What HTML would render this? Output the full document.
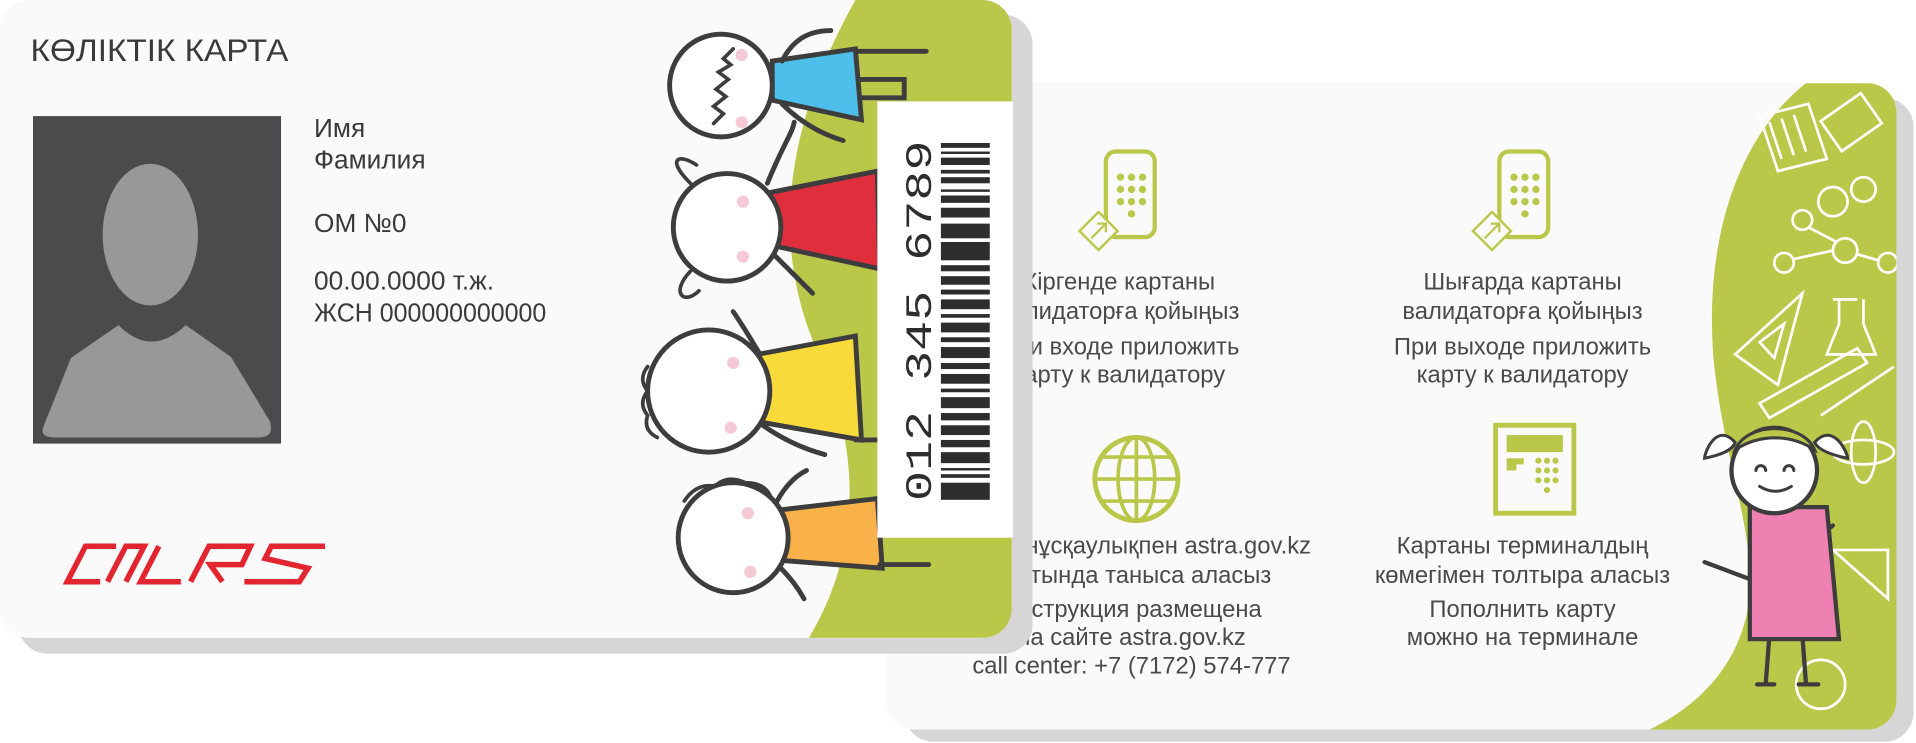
<!DOCTYPE html>
<html><head><meta charset="utf-8"><style>
html,body{margin:0;padding:0;background:#fff;width:1916px;height:743px;overflow:hidden}
svg{display:block}
.t{font-family:"Liberation Sans",sans-serif;fill:#4a4a4a}
.n{font-family:"Liberation Sans Narrow","Liberation Sans",sans-serif;fill:#3a3a3a}
</style></head><body>
<svg width="1916" height="743" viewBox="0 0 1568 608" preserveAspectRatio="none" xmlns="http://www.w3.org/2000/svg">
<defs>
<clipPath id="bc"><rect x="725" y="68" width="827" height="529" rx="24"/></clipPath>
<clipPath id="fc"><rect x="0" y="0" width="828" height="522" rx="24"/></clipPath>
</defs>
<rect x="740" y="80" width="826" height="527" rx="24" fill="#d6d6d6"/>
<rect x="725" y="68" width="827" height="529" rx="24" fill="#fafafa"/>
<g clip-path="url(#bc)">
<path d="M1478,68 C1425,110 1395,190 1402,290 C1410,380 1440,440 1430,500 C1420,550 1385,580 1350,597 L1560,597 L1560,68 Z" fill="#bac84a"/>
<g fill="none" stroke="#fff" stroke-width="2.2">
<rect x="1495" y="85" width="40" height="30" transform="rotate(-35 1515 100)"/>
<path d="M1440,95 l40,-10 l15,45 l-40,10 z M1448,100 l10,30 M1458,97 l10,30 M1468,94 l10,30"/>
<circle cx="1500" cy="165" r="12"/><circle cx="1525" cy="155" r="10"/>
<circle cx="1475" cy="180" r="8"/><circle cx="1510" cy="205" r="10"/><circle cx="1545" cy="215" r="8"/><circle cx="1460" cy="215" r="8"/>
<path d="M1480,186 L1503,198 M1468,212 L1500,205 M1520,208 L1537,213"/>
<path d="M1420,290 l55,-50 l-20,75 z M1440,280 l20,-15 l-8,28 z"/>
<path d="M1500,245 l20,0 M1505,245 l0,20 l-10,25 l40,0 l-10,-25 l0,-20"/>
<path d="M1440,330 l80,-45 l8,12 l-80,45 z M1490,340 l60,-40"/>
<ellipse cx="1525" cy="370" rx="25" ry="10"/><ellipse cx="1525" cy="370" rx="10" ry="25"/>
<path d="M1500,450 l45,0 l0,40 z M1470,560 a20,20 0 1,0 40,0 a20,20 0 1,0 -40,0"/>
</g>
</g>
<g fill="none" stroke="#bac84a" stroke-width="3.5">
<rect x="905" y="124" width="40" height="70" rx="8"/>
<rect x="1227" y="124" width="40" height="70" rx="8"/>
<circle cx="930" cy="392" r="34" stroke-width="4"/>
<ellipse cx="930" cy="392" rx="15" ry="34" stroke-width="3"/>
<line x1="930" y1="358" x2="930" y2="426" stroke-width="3"/>
<line x1="896" y1="392" x2="964" y2="392" stroke-width="3"/>
<line x1="901" y1="374" x2="959" y2="374" stroke-width="3"/>
<line x1="901" y1="410" x2="959" y2="410" stroke-width="3"/>
<rect x="1224" y="348" width="64" height="72" stroke-width="4"/>
</g>
<g fill="#fafafa" stroke="#bac84a" stroke-width="2">
<rect x="888" y="178" width="22" height="22" transform="rotate(45 899 189)"/>
<rect x="1210" y="178" width="22" height="22" transform="rotate(45 1221 189)"/>
</g>
<path d="M893,195 l12,-12 m-7,0 h7 v7 M1215,195 l12,-12 m-7,0 h7 v7" stroke="#bac84a" stroke-width="1.8" fill="none"/>
<g fill="#bac84a">
<circle cx="917" cy="145" r="3"/><circle cx="926" cy="145" r="3"/><circle cx="935" cy="145" r="3"/>
<circle cx="917" cy="155" r="3"/><circle cx="926" cy="155" r="3"/><circle cx="935" cy="155" r="3"/>
<circle cx="917" cy="165" r="3"/><circle cx="926" cy="165" r="3"/><circle cx="935" cy="165" r="3"/>
<circle cx="926" cy="175" r="3"/>
<circle cx="1239" cy="145" r="3"/><circle cx="1248" cy="145" r="3"/><circle cx="1257" cy="145" r="3"/>
<circle cx="1239" cy="155" r="3"/><circle cx="1248" cy="155" r="3"/><circle cx="1257" cy="155" r="3"/>
<circle cx="1239" cy="165" r="3"/><circle cx="1248" cy="165" r="3"/><circle cx="1257" cy="165" r="3"/>
<circle cx="1248" cy="175" r="3"/>
<rect x="1233" y="356" width="46" height="14"/>
<path d="M1233,375 h14 v5 h-6 v5 h-8 z"/>
<circle cx="1259" cy="377" r="2.5"/><circle cx="1266" cy="377" r="2.5"/><circle cx="1273" cy="377" r="2.5"/>
<circle cx="1259" cy="385" r="2.5"/><circle cx="1266" cy="385" r="2.5"/><circle cx="1273" cy="385" r="2.5"/>
<circle cx="1259" cy="393" r="2.5"/><circle cx="1266" cy="393" r="2.5"/><circle cx="1273" cy="393" r="2.5"/>
<circle cx="1266" cy="401" r="2.5"/>
</g>
<g class="t" font-size="19.5" text-anchor="middle">
<text x="916" y="237">Кіргенде картаны</text>
<text x="916" y="261">валидаторға қойыңыз</text>
<text x="916" y="290">При входе приложить</text>
<text x="916" y="313">карту к валидатору</text>
<text x="1246" y="237">Шығарда картаны</text>
<text x="1246" y="261">валидаторға қойыңыз</text>
<text x="1246" y="290">При выходе приложить</text>
<text x="1246" y="313">карту к валидатору</text>
<text x="926" y="453">Толық нұсқаулықпен astra.gov.kz</text>
<text x="926" y="477">сайтында таныса аласыз</text>
<text x="926" y="505">Инструкция размещена</text>
<text x="926" y="528">на сайте astra.gov.kz</text>
<text x="926" y="551">call center: +7 (7172) 574-777</text>
<text x="1246" y="453">Картаны терминалдың</text>
<text x="1246" y="477">көмегімен толтыра аласыз</text>
<text x="1246" y="505">Пополнить карту</text>
<text x="1246" y="528">можно на терминале</text>
</g>
<g stroke="#3d3d3d" stroke-width="3.5" fill="none" stroke-linecap="round">
<path d="M1440,475 L1500,430 M1435,475 L1395,460 M1448,520 L1445,560 M1475,520 L1478,560"/>
<path d="M1438,560 h14 M1472,560 h16"/>
<path d="M1432,415 L1495,415 L1505,523 L1432,523 Z" fill="#ef80b2"/>
<circle cx="1452" cy="385" r="35" fill="#fff"/>
<path d="M1420,368 C1430,345 1475,345 1485,368 C1465,355 1440,355 1420,368 Z" fill="#bac84a" stroke-width="2.5"/>
<path d="M1420,362 C1405,345 1395,370 1395,375 C1410,372 1418,368 1420,362 Z M1485,362 C1500,345 1512,370 1512,375 C1497,372 1488,368 1485,362 Z" fill="#fff" stroke-width="2.5"/>
<path d="M1437,385 a4,4 0 0,1 8,0 M1460,385 a4,4 0 0,1 8,0 M1440,398 q13,8 26,0" stroke-width="2.5"/>
</g>
<rect x="15" y="12" width="830" height="523" rx="24" fill="#d6d6d6"/>
<rect x="0" y="0" width="828" height="522" rx="24" fill="#fafafa"/>
<g clip-path="url(#fc)">
<path d="M700,0 C650,90 625,190 670,290 C705,370 705,450 662,522 L840,522 L840,0 Z" fill="#bac84a"/>
</g>
<text class="n" x="25" y="50" font-size="26" textLength="211" lengthAdjust="spacingAndGlyphs">КӨЛІКТІК КАРТА</text>
<rect x="27" y="95" width="203" height="268" fill="#4b4b4d"/>
<ellipse cx="123" cy="192" rx="39" ry="58" fill="#98989a"/>
<path d="M36,348 L58,293 L97,266 C115,284 133,284 152,266 L189,292 L221,345 C224,356 218,358 210,358 L45,358 C36,358 33,355 36,348 Z" fill="#98989a"/>
<g class="n" font-size="21.5">
<text x="257" y="112">Имя</text>
<text x="257" y="138">Фамилия</text>
<text x="257" y="190">ОМ №0</text>
<text x="257" y="237">00.00.0000 т.ж.</text>
<text x="257" y="263" textLength="190" lengthAdjust="spacingAndGlyphs">ЖСН 000000000000</text>
</g>
<g fill="none" stroke="#e2252f" stroke-width="4.5" stroke-linejoin="miter">
<path d="M95,447 L70,447 L55,476 L82,476"/>
<path d="M88,476 L103,447 L118,447 L103,476 M130,447 L115,476 L148,476"/>
<path d="M156,476 L171,447 L205,447 L198,462 L172,462 L182,476"/>
<path d="M266,447 L222,447 L217,457 L252,465 L245,476 L200,476"/>
</g>
<g stroke="#3d3d3d" stroke-width="4" stroke-linecap="round" fill="none">
<path d="M632,50 L700,40 L705,98 L632,82 Z" fill="#4dbfea"/>
<path d="M700,42 L758,42 M705,65 L740,65 L740,80 L705,80 M640,50 C650,30 665,25 680,25 M640,85 C660,105 680,112 690,115"/>
<circle cx="590" cy="70" r="42" fill="#fff"/>
<path d="M600,40 l-8,8 l6,5 l-10,6 l8,6 l-10,8 l8,6 l-10,8 l8,6 l-8,8" stroke-width="3"/>
<path d="M628,158 L718,140 L720,220 L628,200 Z" fill="#df2e3c"/>
<path d="M628,150 C640,120 648,110 650,100 M630,205 C650,225 660,235 665,240"/>
<circle cx="595" cy="186" r="44" fill="#fff"/>
<path d="M565,150 C545,130 555,125 570,135 M565,222 C548,240 560,250 572,238" stroke-width="3"/>
<path d="M620,290 L700,275 L705,360 L620,345 Z" fill="#f8db3b"/>
<path d="M622,290 C610,270 605,262 600,255 M620,345 C640,360 660,368 675,372 M700,360 L760,360"/>
<circle cx="580" cy="320" r="50" fill="#fff"/>
<path d="M530,300 q-8,10 0,20 q-8,10 0,20 q-4,12 8,18" stroke-width="3"/>
<path d="M632,418 L718,408 L722,465 L632,458 Z" fill="#f9b14a"/>
<path d="M632,418 C640,400 650,390 660,385 M632,458 C650,475 655,485 658,490 M720,462 L760,462"/>
<circle cx="600" cy="440" r="45" fill="#fff"/>
<path d="M560,410 q10,-15 25,-12 q10,-10 25,-3 q15,0 20,10" stroke-width="3"/>
</g>
<g fill="#f6c9d6">
<circle cx="607" cy="45" r="5"/><circle cx="607" cy="100" r="5"/>
<circle cx="608" cy="165" r="5"/><circle cx="608" cy="210" r="5"/>
<circle cx="600" cy="297" r="5"/><circle cx="598" cy="350" r="5"/>
<circle cx="612" cy="420" r="5"/><circle cx="614" cy="468" r="5"/>
</g>
<rect x="718" y="83" width="111" height="357" fill="#fff"/>
<text x="762" y="410" transform="rotate(-90 762 410)" font-family="Liberation Mono,monospace" font-size="30" fill="#2d2d2d" textLength="295" lengthAdjust="spacingAndGlyphs">012 345 6789</text>
<g fill="#2d2d2d">
<rect x="770" y="117" width="40" height="4"/><rect x="770" y="124" width="40" height="2"/><rect x="770" y="129" width="40" height="6"/>
<rect x="770" y="139" width="40" height="3"/><rect x="770" y="145" width="40" height="5"/><rect x="770" y="155" width="40" height="2"/>
<rect x="770" y="160" width="40" height="6"/><rect x="770" y="170" width="40" height="8"/><rect x="770" y="183" width="40" height="12"/>
<rect x="770" y="198" width="40" height="15"/><rect x="770" y="217" width="40" height="5"/><rect x="770" y="226" width="40" height="7"/>
<rect x="770" y="237" width="40" height="4"/><rect x="770" y="245" width="40" height="8"/><rect x="770" y="257" width="40" height="3"/>
<rect x="770" y="264" width="40" height="8"/><rect x="770" y="276" width="40" height="4"/><rect x="770" y="284" width="40" height="9"/>
<rect x="770" y="297" width="40" height="5"/><rect x="770" y="306" width="40" height="8"/><rect x="770" y="318" width="40" height="3"/>
<rect x="770" y="325" width="40" height="9"/><rect x="770" y="338" width="40" height="6"/><rect x="770" y="348" width="40" height="8"/>
<rect x="770" y="360" width="40" height="6"/><rect x="770" y="370" width="40" height="9"/><rect x="770" y="383" width="40" height="2"/>
<rect x="770" y="388" width="40" height="3"/><rect x="770" y="395" width="40" height="14"/>
</g>
</svg>
</body></html>
